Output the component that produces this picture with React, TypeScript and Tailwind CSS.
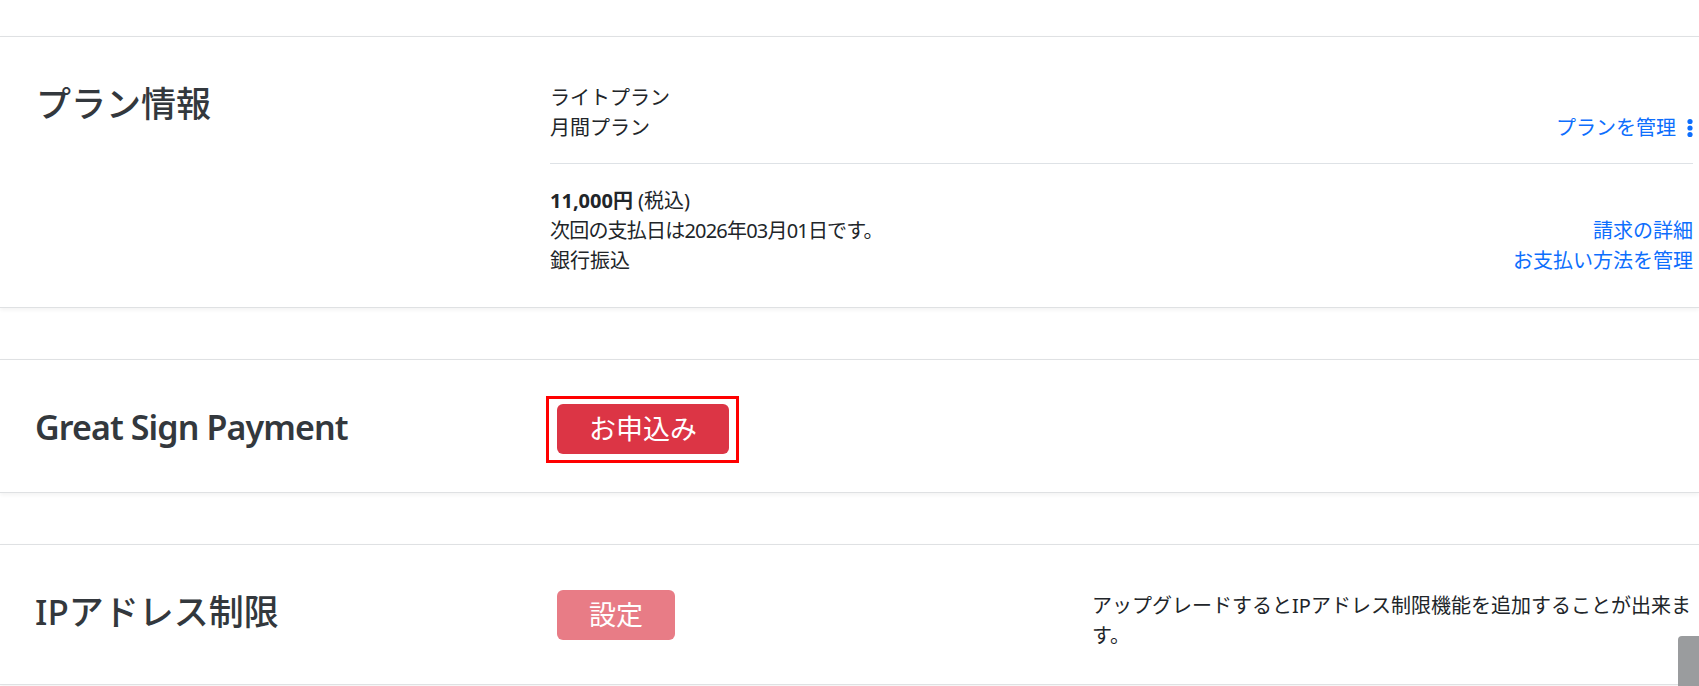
import type { ReactNode } from 'react'

// Vertical three-dot menu icon
function DotsIcon() {
  return (
    <svg width="6" height="20" viewBox="0 0 6 20" className="ml-[11px] shrink-0">
      <circle cx="3" cy="3.5" r="2.6" fill="#0d6efd" />
      <circle cx="3" cy="10" r="2.6" fill="#0d6efd" />
      <circle cx="3" cy="16.5" r="2.6" fill="#0d6efd" />
    </svg>
  )
}

function Card({ className, children }: { className: string; children: ReactNode }) {
  return (
    <section
      className={`flex border-y border-[#dfe1e3] bg-white shadow-[0_2px_4px_rgba(0,0,0,0.05)] ${className}`}
    >
      {children}
    </section>
  )
}

function Heading({ className = '', children }: { className?: string; children: ReactNode }) {
  return <h3 className={`leading-[40px] text-[#33383d] ${className}`}>{children}</h3>
}

export default function App() {
  return (
    <div className="relative h-[686px] overflow-hidden bg-white font-['Noto_Sans','Noto_Sans_CJK_JP',sans-serif] text-[20px] leading-[30px] text-[#212529]">
      <div className="h-[36px]" />

      {/* Plan information */}
      <Card className="items-start pt-[46px] pb-[31px]">
        <div className="w-[550px] shrink-0 pl-[36px] pt-[1px]">
          <Heading className="text-[35px] font-medium">プラン情報</Heading>
        </div>
        <div className="flex-1 pr-[6px]">
          <div className="flex items-end justify-between">
            <div>
              <div>ライトプラン</div>
              <div>月間プラン</div>
            </div>
            <a className="flex items-center text-[#0d6efd]">
              プランを管理
              <DotsIcon />
            </a>
          </div>
          <hr className="mt-[20px] mb-[22px] border-t border-[#dee2e6]" />
          <div className="flex items-end justify-between">
            <div>
              <div>
                <span className="font-bold">11,000円</span> (税込)
              </div>
              <div className="tracking-[-0.8px]">次回の支払日は2026年03月01日です。</div>
              <div>銀行振込</div>
            </div>
            <div className="flex flex-col items-end text-[#0d6efd]">
              <a>請求の詳細</a>
              <a>お支払い方法を管理</a>
            </div>
          </div>
        </div>
      </Card>

      {/* Great Sign Payment */}
      <Card className="mt-[51px] h-[134px] items-center">
        <div className="w-[550px] shrink-0 pl-[35px] pt-[2px]">
          <Heading className="text-[34px] font-semibold tracking-[-0.9px]">Great Sign Payment</Heading>
        </div>
        <div className="-ml-[4px] mt-[7px] border-[3px] border-[#ff0000] pl-[8px] pr-[7px] pt-[5px] pb-[6px]">
          <button className="h-[50px] rounded-[6px] bg-[#dc3545] px-[32px] text-[27px] text-white">
            お申込み
          </button>
        </div>
      </Card>

      {/* IP address restriction */}
      <Card className="mt-[51px] h-[141px] items-center">
        <div className="w-[550px] shrink-0 pb-[6px] pl-[35px]">
          <Heading className="text-[35px] font-medium">IPアドレス制限</Heading>
        </div>
        <div className="w-[542px] shrink-0 pl-[7px]">
          <button className="h-[50px] rounded-[6px] bg-[#e87c86] px-[32px] text-[27px] text-white">
            設定
          </button>
        </div>
        <div className="flex-1 pr-[6px] pt-[12px]">
          アップグレードするとIPアドレス制限機能を追加することが出来ます。
        </div>
      </Card>

      <div className="absolute bottom-0 right-0 h-[50px] w-[21px] rounded-tl-[4px] bg-[#9a9c9e]" />
    </div>
  )
}
